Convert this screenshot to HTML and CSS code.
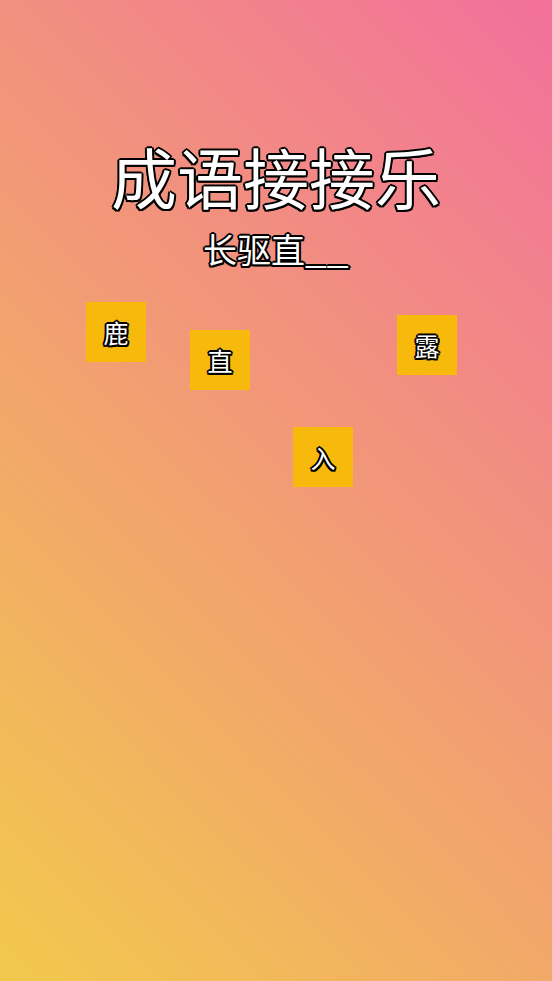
FILE: index.html
```html
<!DOCTYPE html>
<html lang="zh-CN">
<head>
<meta charset="utf-8">
<title>成语接接乐</title>
<link rel="stylesheet" href="styles.css">
</head>
<body>
<main class="page">
  <h1 class="title">成语接接乐</h1>
  <p class="question">长驱直<span class="blank">__</span></p>
  <div class="board">
    <div class="tile" style="left:86px;top:302px">鹿</div>
    <div class="tile" style="left:190px;top:330px">直</div>
    <div class="tile" style="left:397px;top:315px">露</div>
    <div class="tile" style="left:293px;top:427px">入</div>
  </div>
</main>
</body>
</html>
```
FILE: styles.css
```css
html, body {
  margin: 0;
  padding: 0;
  height: 100%;
}
body {
  font-family: "Noto Sans CJK SC", "Noto Sans", sans-serif;
  background: linear-gradient(45deg, #f2c94c, #f2709c);
  overflow: hidden;
}
.page {
  position: relative;
  height: 100vh;
  display: flex;
  flex-direction: column;
  align-items: center;
  padding-top: 135px;
  box-sizing: border-box;
}
.title, .question, .tile {
  color: #fff;
  font-weight: 400;
  text-shadow:
    -1.5px -1.5px 0 #000, 1.5px -1.5px 0 #000, -1.5px 1.5px 0 #000, 1.5px 1.5px 0 #000,
    0 -2px 0 #000, 0 2px 0 #000, -2px 0 0 #000, 2px 0 0 #000;
}
.title {
  margin: 0;
  font-size: 66px;
  line-height: 80px;
}
.question {
  margin: 14px 0 0;
  font-size: 34px;
  line-height: 40px;
  padding-right: 6px;
}
.blank {
  display: inline-block;
  transform: scaleX(1.15);
  transform-origin: left center;
}
.board {
  position: absolute;
  inset: 0;
}
.tile {
  position: absolute;
  width: 60px;
  height: 60px;
  background: #f6b90c;
  display: flex;
  align-items: center;
  justify-content: center;
  font-size: 25px;
  line-height: 1;
}
```
